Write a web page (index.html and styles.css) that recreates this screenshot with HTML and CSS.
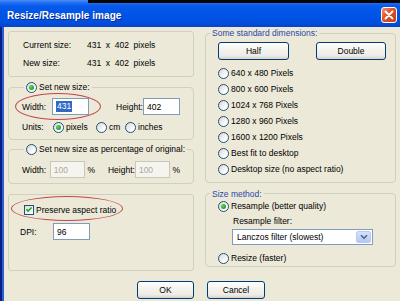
FILE: index.html
```html
<!DOCTYPE html>
<html>
<head>
<meta charset="utf-8">
<link rel="stylesheet" href="styles.css">
</head>
<body>
<div class="win">
  <div class="titlebar">
    <span class="ttext">Resize/Resample image</span>
    <div class="close">
      <svg width="10" height="10" viewBox="0 0 10 10"><path d="M1.5 1.5 L8.5 8.5 M8.5 1.5 L1.5 8.5" stroke="#fff" stroke-width="1.8" stroke-linecap="round"/></svg>
    </div>
  </div>
  <div class="topblack"></div>
  <div class="main">
    <div class="col left">
      <div class="box info">
        <div class="irow"><span class="ilab">Current size:</span><span class="ival">431 x 402 pixels</span></div>
        <div class="irow"><span class="ilab">New size:</span><span class="ival">431 x 402 pixels</span></div>
      </div>
      <fieldset class="grp g2">
        <legend class="lg lg-left"><span class="radio on"></span><span class="lt">Set new size:</span></legend>
        <div class="frow r-wh">
          <span class="lab l-w">Width:</span><span class="input"><span class="sel">431</span></span>
          <span class="lab l-h">Height:</span><span class="input">402</span>
        </div>
        <div class="frow r-units">
          <span class="lab l-u">Units:</span>
          <span class="radio on"></span><span class="rl u-px">pixels</span>
          <span class="radio"></span><span class="rl u-cm">cm</span>
          <span class="radio"></span><span class="rl">inches</span>
        </div>
      </fieldset>
      <fieldset class="grp g3">
        <legend class="lg lg-left"><span class="radio"></span><span class="lt">Set new size as percentage of original:</span></legend>
        <div class="frow r-pct">
          <span class="lab l-w">Width:</span><span class="input dis">100</span><span class="pct">%</span>
          <span class="lab l-h2">Height:</span><span class="input dis">100</span><span class="pct">%</span>
        </div>
      </fieldset>
      <div class="box g4">
        <div class="frow r-chk">
          <span class="check"><svg width="9" height="9" viewBox="0 0 9 9"><path d="M1.6 4.3 L3.5 6.3 L7.4 2.2" fill="none" stroke="#21A121" stroke-width="1.7"/></svg></span>
          <span class="rl">Preserve aspect ratio</span>
        </div>
        <div class="frow r-dpi">
          <span class="lab l-dpi">DPI:</span><span class="input">96</span>
        </div>
      </div>
    </div>
    <div class="col right">
      <fieldset class="grp g-std">
        <legend class="lg lg-right">Some standard dimensions:</legend>
        <div class="btnrow">
          <span class="btn b-half">Half</span>
          <span class="btn b-double">Double</span>
        </div>
        <div class="rlist">
          <div class="ritem"><span class="radio"></span><span class="rl">640 x 480 Pixels</span></div>
          <div class="ritem"><span class="radio"></span><span class="rl">800 x 600 Pixels</span></div>
          <div class="ritem"><span class="radio"></span><span class="rl">1024 x 768 Pixels</span></div>
          <div class="ritem"><span class="radio"></span><span class="rl">1280 x 960 Pixels</span></div>
          <div class="ritem"><span class="radio"></span><span class="rl">1600 x 1200 Pixels</span></div>
          <div class="ritem"><span class="radio"></span><span class="rl">Best fit to desktop</span></div>
          <div class="ritem"><span class="radio"></span><span class="rl">Desktop size (no aspect ratio)</span></div>
        </div>
      </fieldset>
      <fieldset class="grp g-method">
        <legend class="lg lg-right lg-small">Size method:</legend>
        <div class="ritem m-res"><span class="radio on"></span><span class="rl">Resample (better quality)</span></div>
        <div class="m-flab">Resample filter:</div>
        <div class="select">
          <span class="stext">Lanczos filter (slowest)</span>
          <span class="sbtn"><svg width="8" height="6" viewBox="0 0 8 6"><path d="M1 1.2 L4 4.2 L7 1.2" fill="none" stroke="#4D6185" stroke-width="1.6"/></svg></span>
        </div>
        <div class="ritem m-rsz"><span class="radio"></span><span class="rl">Resize (faster)</span></div>
      </fieldset>
    </div>
    <div class="bcell bleft"><span class="btn b-ok">OK</span></div>
    <div class="bcell bright"><span class="btn b-cancel">Cancel</span></div>
  </div>
  <div class="ellipse e1"></div>
  <div class="ellipse e2"></div>
</div>
</body>
</html>
```

FILE: styles.css
```css
* { box-sizing: border-box; margin: 0; padding: 0; }
html, body { width: 400px; height: 301px; overflow: hidden; }
body {
  font-family: "Liberation Sans", Arial, sans-serif;
  font-size: 8.5px;
  color: #000;
  background: #ECE9D8;
}
.win { position: relative; width: 400px; height: 301px; background: #ECE9D8; overflow: hidden; }

.titlebar {
  height: 27px;
  padding: 3px 3px 0 7px;
  display: flex;
  align-items: center;
  color: #fff;
  font-weight: bold;
  font-size: 10px;
  background: linear-gradient(#4A8DF6 0, #1F6CF2 3px, #0659EB 6px, #0055E6 14px, #0050E0 22px, #0545C8 27px);
}
.ttext { text-shadow: 1px 1px 0 #0A2A90; letter-spacing: 0.05px; }
.close {
  margin-left: auto;
  width: 16px;
  height: 16px;
  border: 1px solid #fff;
  border-radius: 3px;
  background: linear-gradient(135deg, #F09070 0, #E0562E 40%, #C63A12 100%);
  display: flex;
  align-items: center;
  justify-content: center;
}
.topblack { position: absolute; left: 88px; top: 0; width: 312px; height: 3px; background: #050505; }

.main {
  display: grid;
  grid-template-columns: 186px 191px;
  grid-template-rows: auto auto;
  column-gap: 11px;
  padding-left: 8px;
  height: 274px;
  background: linear-gradient(to right, #0A1F7A 0, #0A1F7A 2px, #2A5DDC 2px, #2A5DDC 4px, #ECE9D8 4px);
}
.col { display: flex; flex-direction: column; }
.left { padding-top: 4px; }

.box { border: 1px solid #D0D0BF; border-radius: 3px; }
.info { height: 46px; padding: 7px 0 0 14px; display: flex; flex-direction: column; gap: 6px; }
.irow { display: flex; height: 12px; align-items: center; }
.ilab { width: 64px; }
.ival { word-spacing: 2.3px; }

.grp { border: 1px solid #D0D0BF; border-radius: 4px; padding: 0; margin: 0; min-width: 0; }
.lg { display: flex; align-items: center; height: 12px; padding: 0 2px; white-space: nowrap; }
.lg-left { margin-left: 2px; }
.lg-left .lt { margin-left: 2px; }
.lg-right { margin-left: -8px; color: #2A48A8; }
.lg-small { height: 11px; }

.g2 { margin-top: 4px; padding: 5px 0 5px 13px; }
.frow { display: flex; align-items: center; }
.r-wh { height: 17px; }
.lab { display: inline-block; }
.l-w { width: 30px; }
.l-h { width: 27px; margin-left: 27px; }
.r-units { height: 14px; margin-top: 5px; }
.l-u { width: 31px; }
.rl { margin-left: 2px; }
.u-px { width: 30px; }
.u-cm { width: 16px; }

.input {
  display: inline-flex;
  align-items: center;
  width: 37px;
  height: 17px;
  border: 1px solid #7F9DB9;
  background: #fff;
  padding-left: 3px;
}
.sel { background: #316AC5; color: #fff; padding: 0 1px; line-height: 11px; }
.input.dis { border-color: #C9C7BA; background: #F5F4EF; color: #ACA899; }

.g3 { margin-top: 3px; padding: 6px 0 5px 13px; }
.r-pct { height: 17px; }
.pct { width: 25px; padding-left: 3px; }
.l-h2 { width: 29px; }

.g4 { margin-top: 10px; height: 77px; padding: 8px 0 0 15px; }
.r-chk { height: 13px; }
.check {
  width: 10px; height: 10px;
  border: 1px solid #1C5180;
  background: linear-gradient(135deg, #DCDCD7, #fff);
  display: inline-flex; align-items: center; justify-content: center;
}
.r-dpi { margin-top: 7px; height: 17px; margin-left: -4px; }
.l-dpi { width: 33px; }

.radio {
  display: inline-flex;
  align-items: center;
  justify-content: center;
  width: 11px;
  height: 11px;
  border: 1px solid #1C5180;
  border-radius: 50%;
  background: linear-gradient(135deg, #D8D7D0, #fff 75%);
  flex: none;
}
.radio.on::after {
  content: "";
  width: 5px;
  height: 5px;
  border-radius: 50%;
  background: radial-gradient(circle at 35% 35%, #5FD55F, #21A121 70%);
}

.g-std { padding: 3px 0 5px 12px; }
.btnrow { display: flex; gap: 27px; }
.btn {
  display: inline-flex;
  align-items: center;
  justify-content: center;
  height: 18px;
  border: 1px solid #003C74;
  border-radius: 3px;
  background: linear-gradient(#FFFFFF 0, #F4F3EE 40%, #ECEBE6 80%, #D8D2C6 100%);
}
.b-half { width: 71px; }
.b-double { width: 70px; }
.rlist { margin-top: 5px; display: flex; flex-direction: column; }
.ritem { display: flex; align-items: center; height: 16px; }

.g-method { margin-top: 5px; padding: 0 0 1px 12px; }
.m-res { height: 14px; }
.m-flab { height: 14px; margin-top: 1px; padding-left: 15px; display: flex; align-items: center; }
.select {
  margin-top: 1px;
  margin-left: 14px;
  width: 141px;
  height: 16px;
  border: 1px solid #7F9DB9;
  background: #fff;
  display: flex;
  align-items: center;
  padding: 0 1px 0 4px;
}
.stext { flex: 1; }
.sbtn {
  width: 15px;
  height: 12px;
  border-radius: 2px;
  background: linear-gradient(#D5E1FD, #B4C8F6);
  border: 1px solid #B9CBF3;
  display: flex;
  align-items: center;
  justify-content: center;
}
.m-rsz { margin-top: 6px; height: 14px; }

.bcell { margin-top: 7px; display: flex; }
.bleft { justify-content: flex-end; }
.bright { padding-left: 2px; }
.b-ok { width: 57px; }
.b-cancel { width: 58px; }

.ellipse { position: absolute; border: 1px solid #C04848; border-radius: 50%; }
.e1 { left: 15px; top: 93px; width: 86px; height: 27px; }
.e2 { left: 11px; top: 196px; width: 112px; height: 25px; }
```
